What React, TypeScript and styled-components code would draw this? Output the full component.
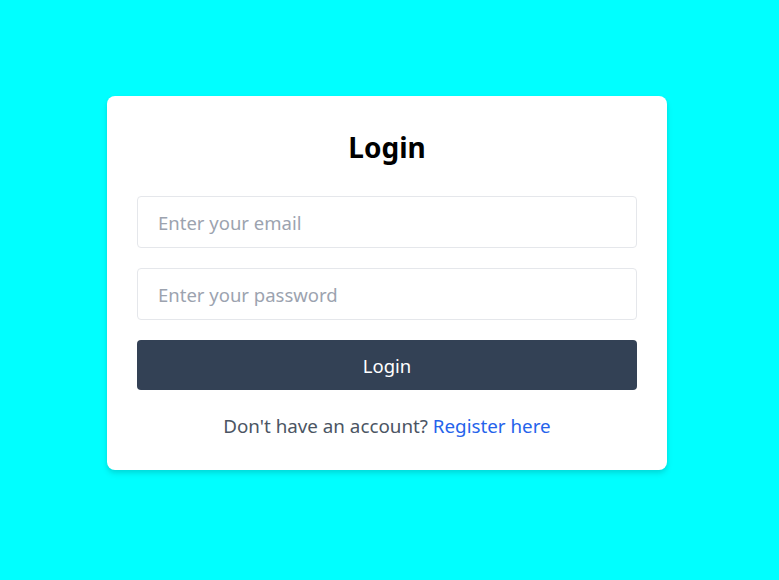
import React from "react";
import styled, { createGlobalStyle } from "styled-components";

const Global = createGlobalStyle`
  html, body { margin: 0; padding: 0; }
  body {
    background: #00ffff;
    font-family: "Segoe UI", "Noto Sans", "Open Sans", sans-serif;
  }
  * { box-sizing: border-box; }
`;

const Page = styled.div`
  min-height: 580px;
  display: flex;
  justify-content: center;
  align-items: flex-start;
  padding: 96px 5px 0 0;
`;

const Card = styled.form`
  width: 560px;
  background: #ffffff;
  border-radius: 8px;
  padding: 30px;
  box-shadow: 0 4px 6px rgba(0, 0, 0, 0.1), 0 2px 4px rgba(0, 0, 0, 0.06);
  display: flex;
  flex-direction: column;
`;

const Title = styled.h2`
  margin: 0 0 28px;
  font-size: 28px;
  line-height: 42px;
  font-weight: 700;
  text-align: center;
  color: #000;
`;

const Input = styled.input`
  height: 52px;
  width: 100%;
  border: 1px solid #e5e7eb;
  border-radius: 4px;
  padding: 0 20px;
  font-family: inherit;
  font-size: 18.5px;
  color: #111827;
  margin-bottom: 20px;
  outline: none;
  &::placeholder { color: #9ca3af; }
`;

const Button = styled.button`
  height: 50px;
  width: 100%;
  border: none;
  border-radius: 4px;
  background: #334155;
  color: #ffffff;
  font-family: inherit;
  font-size: 18.5px;
  cursor: pointer;
`;

const Footer = styled.p`
  margin: 23px 0 0;
  text-align: center;
  font-size: 18.8px;
  line-height: 27px;
  color: #4b5563;
`;

const Link = styled.a`
  color: #2563eb;
  text-decoration: none;
`;

export default function App() {
  return (
    <>
      <Global />
      <Page>
        <Card onSubmit={(e) => e.preventDefault()}>
          <Title>Login</Title>
          <Input type="email" placeholder="Enter your email" />
          <Input type="password" placeholder="Enter your password" />
          <Button type="submit">Login</Button>
          <Footer>
            Don't have an account? <Link href="#">Register here</Link>
          </Footer>
        </Card>
      </Page>
    </>
  );
}
